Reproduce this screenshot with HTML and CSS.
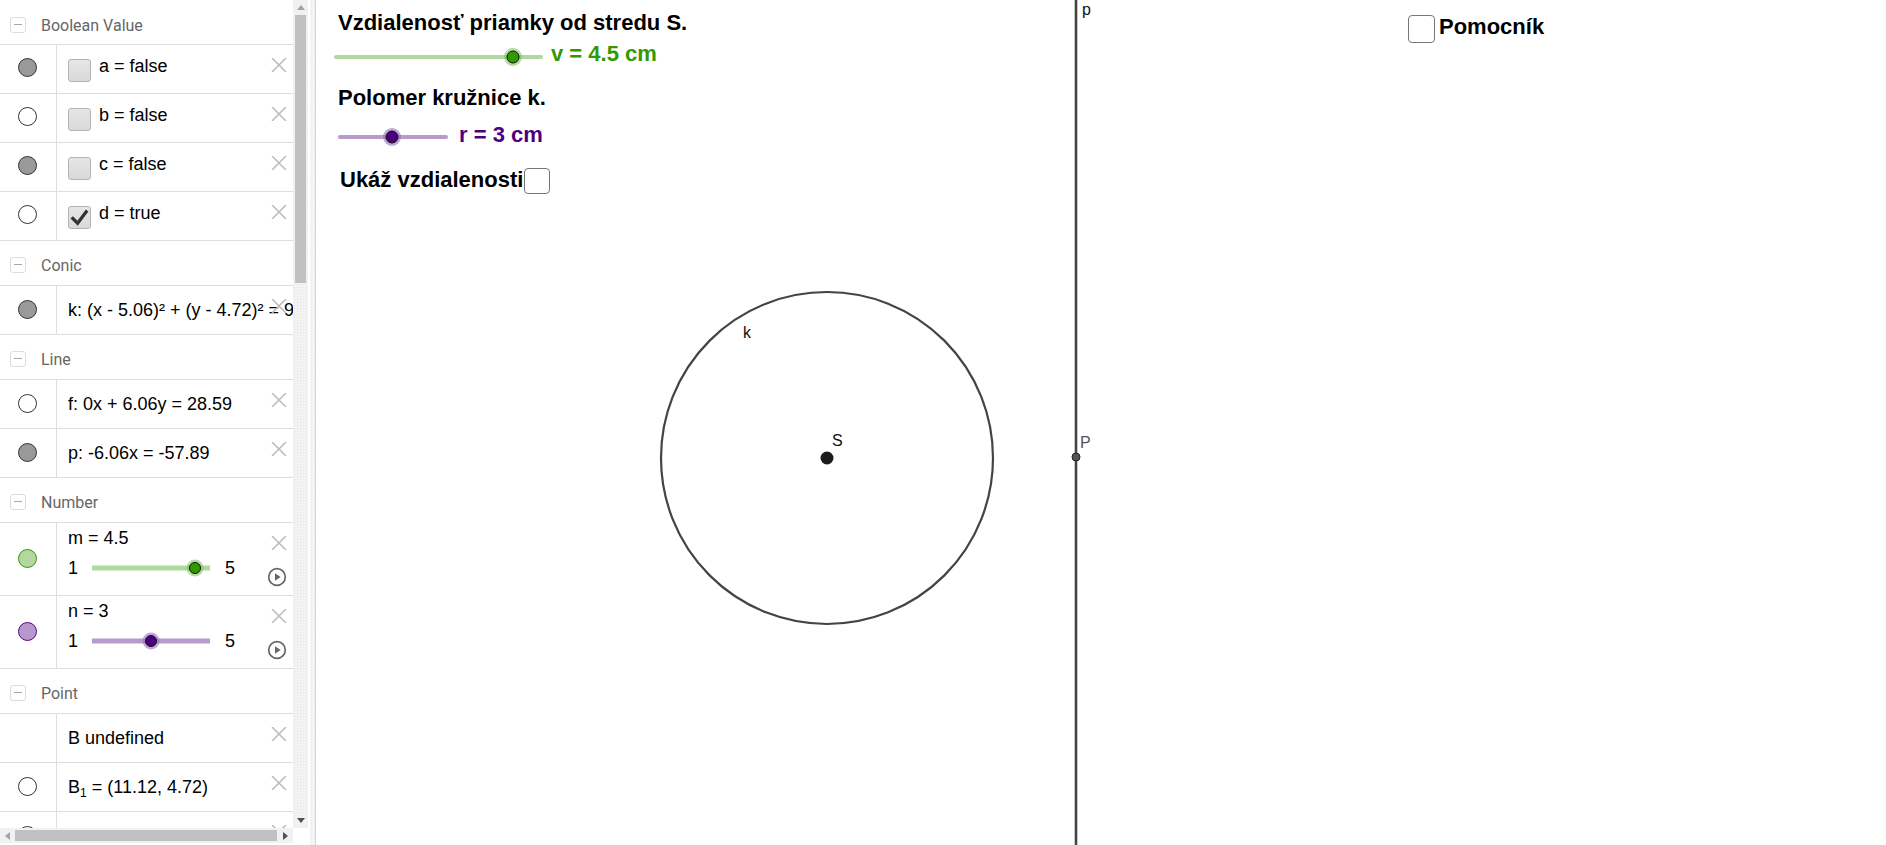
FILE: index.html
```html
<!DOCTYPE html>
<html lang="sk">
<head>
<meta charset="utf-8">
<title>GeoGebra</title>
<link rel="stylesheet" href="styles.css">
</head>
<body>
<div class="app">
  <div class="algebra">
    <div class="av-scroll">
      <div class="av-list">

        <div class="group">
          <div class="group-head first"><span class="toggle"></span><span class="group-title">Boolean Value</span></div>
          <div class="item">
            <div class="marble-cell cbrow"><span class="marble gray"></span></div>
            <div class="item-body has-cb"><span class="cb"></span><span>a = false</span></div>
            <svg class="close" viewBox="0 0 16 14"><path d="M1 0 L15 14 M15 0 L1 14"/></svg>
          </div>
          <div class="item">
            <div class="marble-cell cbrow"><span class="marble white"></span></div>
            <div class="item-body has-cb"><span class="cb"></span><span>b = false</span></div>
            <svg class="close" viewBox="0 0 16 14"><path d="M1 0 L15 14 M15 0 L1 14"/></svg>
          </div>
          <div class="item">
            <div class="marble-cell cbrow"><span class="marble gray"></span></div>
            <div class="item-body has-cb"><span class="cb"></span><span>c = false</span></div>
            <svg class="close" viewBox="0 0 16 14"><path d="M1 0 L15 14 M15 0 L1 14"/></svg>
          </div>
          <div class="item">
            <div class="marble-cell cbrow"><span class="marble white"></span></div>
            <div class="item-body has-cb"><span class="cb checked"><svg viewBox="0 0 22 22"><path d="M4 12 L9 17 L18 5"/></svg></span><span>d = true</span></div>
            <svg class="close" viewBox="0 0 16 14"><path d="M1 0 L15 14 M15 0 L1 14"/></svg>
          </div>
        </div>

        <div class="group">
          <div class="group-head"><span class="toggle"></span><span class="group-title">Conic</span></div>
          <div class="item">
            <div class="marble-cell"><span class="marble gray"></span></div>
            <div class="item-body"><span>k: (x - 5.06)² + (y - 4.72)² = 9</span></div>
            <svg class="close" viewBox="0 0 16 14"><path d="M1 0 L15 14 M15 0 L1 14"/></svg>
          </div>
        </div>

        <div class="group">
          <div class="group-head"><span class="toggle"></span><span class="group-title">Line</span></div>
          <div class="item">
            <div class="marble-cell"><span class="marble white"></span></div>
            <div class="item-body"><span>f: 0x + 6.06y = 28.59</span></div>
            <svg class="close" viewBox="0 0 16 14"><path d="M1 0 L15 14 M15 0 L1 14"/></svg>
          </div>
          <div class="item">
            <div class="marble-cell"><span class="marble gray"></span></div>
            <div class="item-body"><span>p: -6.06x = -57.89</span></div>
            <svg class="close" viewBox="0 0 16 14"><path d="M1 0 L15 14 M15 0 L1 14"/></svg>
          </div>
        </div>

        <div class="group">
          <div class="group-head"><span class="toggle"></span><span class="group-title">Number</span></div>
          <div class="item num">
            <div class="marble-cell"><span class="marble green"></span></div>
            <div class="num-body">
              <div class="num-label">m = 4.5</div>
              <div class="num-slider">
                <span class="lim">1</span>
                <svg class="av-track" viewBox="0 0 118 20"><line x1="0" y1="10" x2="118" y2="10" class="trk-g"/><circle cx="103" cy="10" r="8.5" class="halo-g"/><circle cx="103" cy="10" r="5.5" class="knob-g"/></svg>
                <span class="lim">5</span>
              </div>
            </div>
            <svg class="close" viewBox="0 0 16 14"><path d="M1 0 L15 14 M15 0 L1 14"/></svg>
            <svg class="play" viewBox="0 0 20 20"><circle cx="10" cy="10" r="8.3"/><path d="M8 6.3 L13.6 10 L8 13.7 Z"/></svg>
          </div>
          <div class="item num">
            <div class="marble-cell"><span class="marble purple"></span></div>
            <div class="num-body">
              <div class="num-label">n = 3</div>
              <div class="num-slider">
                <span class="lim">1</span>
                <svg class="av-track" viewBox="0 0 118 20"><line x1="0" y1="10" x2="118" y2="10" class="trk-p"/><circle cx="59" cy="10" r="8.5" class="halo-p"/><circle cx="59" cy="10" r="5.5" class="knob-p"/></svg>
                <span class="lim">5</span>
              </div>
            </div>
            <svg class="close" viewBox="0 0 16 14"><path d="M1 0 L15 14 M15 0 L1 14"/></svg>
            <svg class="play" viewBox="0 0 20 20"><circle cx="10" cy="10" r="8.3"/><path d="M8 6.3 L13.6 10 L8 13.7 Z"/></svg>
          </div>
        </div>

        <div class="group">
          <div class="group-head"><span class="toggle"></span><span class="group-title">Point</span></div>
          <div class="item">
            <div class="marble-cell"></div>
            <div class="item-body"><span>B undefined</span></div>
            <svg class="close" viewBox="0 0 16 14"><path d="M1 0 L15 14 M15 0 L1 14"/></svg>
          </div>
          <div class="item">
            <div class="marble-cell"><span class="marble white"></span></div>
            <div class="item-body"><span>B<sub>1</sub> = (11.12, 4.72)</span></div>
            <svg class="close" viewBox="0 0 16 14"><path d="M1 0 L15 14 M15 0 L1 14"/></svg>
          </div>
          <div class="item">
            <div class="marble-cell"><span class="marble white"></span></div>
            <div class="item-body"></div>
            <svg class="close" viewBox="0 0 16 14"><path d="M1 0 L15 14 M15 0 L1 14"/></svg>
          </div>
        </div>

      </div>
      <div class="vscroll">
        <div class="arrow-box"><span class="tri up"></span></div>
        <div class="vthumb"></div>
        <div class="vtrack"></div>
        <div class="arrow-box"><span class="tri down"></span></div>
      </div>
    </div>
    <div class="hscroll">
      <div class="harrow"><span class="tri left"></span></div>
      <div class="hthumb"></div>
      <div class="hrest"></div>
      <div class="harrow"><span class="tri right"></span></div>
    </div>
  </div>
  <div class="splitter"></div>
  <div class="graphics">
    <svg class="canvas" viewBox="0 0 1570 845" width="1570" height="845">
      <line x1="760" y1="0" x2="760" y2="845" class="geo-line"/>
      <circle cx="511" cy="458" r="166" class="geo-circle"/>
      <circle cx="511" cy="458" r="6.5" class="pt-s"/>
      <circle cx="760" cy="457" r="4" class="pt-p"/>
      <line x1="20" y1="57" x2="225" y2="57" class="gtrk-g"/>
      <circle cx="197" cy="57" r="9" class="halo-g"/>
      <circle cx="197" cy="57" r="6" class="knob-g"/>
      <line x1="24" y1="137" x2="130" y2="137" class="gtrk-p"/>
      <circle cx="76" cy="137" r="9" class="halo-p"/>
      <circle cx="76" cy="137" r="6" class="knob-p"/>
    </svg>
    <div class="gtext title1">Vzdialenosť priamky od stredu S.</div>
    <div class="gtext val-v">v = 4.5 cm</div>
    <div class="gtext title2">Polomer kružnice k.</div>
    <div class="gtext val-r">r = 3 cm</div>
    <div class="gtext show-dist">Ukáž vzdialenosti<span class="gcb"></span></div>
    <div class="gtext helper"><span class="gcb"></span>Pomocník</div>
    <div class="lbl lbl-p">p</div>
    <div class="lbl lbl-k">k</div>
    <div class="lbl lbl-s">S</div>
    <div class="lbl lbl-pp">P</div>
  </div>
</div>
</body>
</html>
```

FILE: styles.css
```css
* { box-sizing: border-box; }
html, body { margin: 0; padding: 0; background: #fff; }
body { width: 1886px; height: 845px; overflow: hidden; font-family: "Liberation Sans", Arial, sans-serif; color: #000; }

.app { display: flex; width: 1886px; height: 845px; overflow: hidden; }

/* ---------- Algebra view ---------- */
.algebra { width: 308px; flex: none; display: flex; flex-direction: column; }
.av-scroll { display: flex; height: 828px; }
.av-list { width: 293px; overflow: hidden; }

.group { border-bottom: 1px solid #dedede; }
.group-head { height: 44px; display: flex; align-items: center; padding: 4px 0 0 10px; }
.group-head.first { padding-top: 6px; }
.toggle { width: 16px; height: 16px; border: 1px solid #dcdcdc; border-radius: 3px; position: relative; flex: none; }
.toggle::after { content: ""; position: absolute; left: 3px; top: 6px; width: 8px; height: 1px; background: #a8a8a8; }
.group-title { margin-left: 15px; font-family: Roboto, "Liberation Sans", sans-serif; font-size: 16px; color: #666; }

.item { position: relative; display: flex; height: 49px; border-top: 1px solid #dedede; }
.item.num { height: 73px; }
.marble-cell { width: 57px; flex: none; border-right: 1px solid #dedede; display: flex; align-items: center; justify-content: center; padding-bottom: 2px; padding-right: 1px; }
.marble-cell.cbrow { padding-bottom: 4px; }
.item.num .marble-cell { padding-bottom: 2px; }
.marble { width: 19px; height: 19px; border-radius: 50%; border: 1px solid #333; }
.marble.gray { background: #999; }
.marble.white { background: #fff; }
.marble.green { background: #b2d8a0; border-color: #339900; }
.marble.purple { background: #b797cc; border-color: #4d0a80; }

.item-body { display: flex; align-items: center; padding: 0 0 0 11px; font-size: 18px; white-space: nowrap; }
.item-body.has-cb { padding-bottom: 6px; }
.item-body sub { font-size: 12px; vertical-align: -4px; line-height: 0; }
.cb { width: 23px; height: 23px; margin: 8px 8px 0 0; border: 1px solid #b4b4b4; border-radius: 3px; background: linear-gradient(#e6e6e6, #d9d9d9); flex: none; display: flex; }
.cb svg { width: 21px; height: 21px; }
.cb svg path { fill: none; stroke: #333; stroke-width: 3.4; stroke-linecap: square; stroke-linejoin: miter; }

.close { position: absolute; right: 6px; top: 13px; width: 16px; height: 14px; }
.close path { stroke: #bdbdbd; stroke-width: 1.6; fill: none; }
.item.num .close { top: 13px; }
.play { position: absolute; right: 6px; top: 44px; width: 20px; height: 20px; }
.play circle { fill: none; stroke: #666; stroke-width: 1.7; }
.play path { fill: #666; }

.num-body { display: flex; flex-direction: column; padding-left: 11px; font-size: 18px; }
.num-label { height: 30px; display: flex; align-items: center; }
.num-slider { height: 30px; display: flex; align-items: center; }
.lim { width: 24px; }
.av-track { width: 118px; height: 20px; margin-right: 15px; overflow: visible; }
.trk-g { stroke: #b0d99d; stroke-width: 5; }
.trk-p { stroke: #b89bcd; stroke-width: 5; }
.halo-g { fill: rgba(120, 190, 90, 0.55); }
.knob-g { fill: #339900; stroke: #111; stroke-width: 1; }
.halo-p { fill: rgba(150, 110, 190, 0.6); }
.knob-p { fill: #4c0080; stroke: #111; stroke-width: 1; }

/* scrollbars */
.vscroll { width: 15px; flex: none; background: #f1f1f1; display: flex; flex-direction: column; align-items: center; }
.arrow-box { width: 15px; height: 15px; flex: none; display: flex; align-items: center; justify-content: center; }
.vthumb { width: 11px; height: 268px; background: #c1c1c1; flex: none; }
.vtrack { flex: 1; width: 15px; background-color: #f3f3f3; background-image: radial-gradient(#e4e4e4 0.6px, transparent 0.7px); background-size: 3px 3px; }
.tri { width: 0; height: 0; border: 4px solid transparent; }
.tri.up { border-bottom: 5px solid #a3a3a3; border-top: 0; }
.tri.down { border-top: 5px solid #505050; border-bottom: 0; }
.tri.left { border-right: 5px solid #a3a3a3; border-left: 0; }
.tri.right { border-left: 5px solid #505050; border-right: 0; }

.hscroll { width: 293px; height: 15px; background: #f1f1f1; display: flex; align-items: center; }
.harrow { width: 15px; height: 15px; flex: none; display: flex; align-items: center; justify-content: center; }
.hthumb { width: 262px; height: 11px; background: #c1c1c1; flex: none; }
.hrest { flex: 1; }

.splitter { width: 8px; flex: none; border-left: 2px solid #fff; border-right: 1px solid #d6d6d6; background-color: #f5f5f5; background-image: radial-gradient(#e6e6e6 0.6px, transparent 0.7px); background-size: 3px 3px; }

/* ---------- Graphics view ---------- */
.graphics { position: relative; width: 1570px; height: 845px; flex: none; overflow: hidden; background: #fff; }
.canvas { position: absolute; left: 0; top: 0; }
.geo-line { stroke: #444; stroke-width: 2.6; }
.geo-circle { fill: none; stroke: #444; stroke-width: 2.2; }
.pt-s { fill: #1c1c1c; }
.pt-p { fill: #555; stroke: #222; stroke-width: 1; }
.gtrk-g { stroke: #b0d99d; stroke-width: 4; stroke-linecap: round; }
.gtrk-p { stroke: #b89bcd; stroke-width: 4; stroke-linecap: round; }

.gtext { position: absolute; font-weight: bold; font-size: 22px; line-height: 26px; white-space: nowrap; display: flex; align-items: center; }
.title1 { left: 22px; top: 10px; }
.val-v { left: 235px; top: 41px; color: #339900; }
.title2 { left: 22px; top: 85px; }
.val-r { left: 143px; top: 122px; color: #4c0080; }
.show-dist { left: 24px; top: 166px; }
.show-dist .gcb { margin-left: 1px; margin-top: 2px; }
.helper { left: 1092px; top: 11px; }
.helper .gcb { margin-right: 4px; margin-top: 4px; width: 27px; height: 28px; }
.gcb { display: inline-block; width: 26px; height: 26px; border: 1.5px solid #777; border-radius: 4px; background: #fff; }

.lbl { position: absolute; font-size: 16px; line-height: 18px; color: #111; }
.lbl-p { left: 766px; top: 1px; }
.lbl-k { left: 427px; top: 324px; }
.lbl-s { left: 516px; top: 432px; }
.lbl-pp { left: 764px; top: 434px; color: #555; }
```
